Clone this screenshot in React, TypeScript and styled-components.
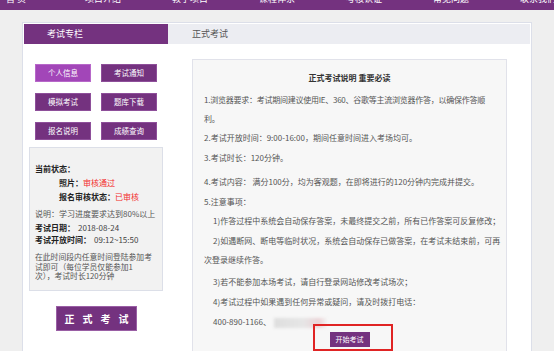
import styled, { createGlobalStyle } from "styled-components";

const GlobalStyle = createGlobalStyle`
  html, body {
    margin: 0;
    padding: 0;
    background: #efefef;
    font-family: "Noto Sans CJK SC", "Noto Sans", sans-serif;
  }
  * {
    box-sizing: border-box;
  }
`;

const PURPLE = "#74327f";

const TopNav = styled.div`
  height: 10px;
  background: ${PURPLE};
  display: flex;
  justify-content: center;
  align-items: flex-end;
  overflow: hidden;
`;

const NavItem = styled.div`
  flex: 0 0 87px;
  text-align: center;
  color: #ffffff;
  font-size: 9px;
  line-height: 12px;
  padding-bottom: 5px;
`;

const Panel = styled.div`
  width: 510px;
  margin: 12px 0 0 22px;
  background: #ffffff;
  border: 1px solid #dcdfe9;
  padding: 1px;
  height: 340px;
`;

const TabBar = styled.div`
  display: flex;
  height: 20px;
`;

const Tab = styled.div<{ $active?: boolean }>`
  flex: ${(p) => (p.$active ? "0 0 144px" : "1")};
  background: ${(p) => (p.$active ? PURPLE : "#ecedf2")};
  color: ${(p) => (p.$active ? "#ffffff" : "#555555")};
  font-size: 9px;
  line-height: 20px;
  padding-left: ${(p) => (p.$active ? "23px" : "24px")};
`;

const Body = styled.div`
  display: flex;
  align-items: flex-start;
`;

const Sidebar = styled.div`
  flex: 0 0 144px;
  display: flex;
  flex-direction: column;
  align-items: center;
`;

const MenuGrid = styled.div`
  margin-top: 20px;
  display: grid;
  grid-template-columns: 56px 56px;
  column-gap: 10px;
  row-gap: 11px;
`;

const MenuButton = styled.div<{ $active?: boolean }>`
  height: 18px;
  background: ${(p) => (p.$active ? "#a246b8" : PURPLE)};
  border: 1px solid ${(p) => (p.$active ? "#b768c9" : "#8e4f9a")};
  color: #ffffff;
  font-size: 7.5px;
  line-height: 16px;
  text-align: center;
`;

const StatusBox = styled.div`
  margin-top: 7px;
  width: 134px;
  background: #f2f2f2;
  border: 1px solid #dcdfe8;
  padding: 14px 4px 9px 5px;
  font-size: 8px;
  color: #333333;
`;

const StatusLine = styled.div<{ $indent?: number; $mt?: number; $lh?: number }>`
  line-height: ${(p) => p.$lh ?? 14}px;
  padding-left: ${(p) => p.$indent ?? 0}px;
  margin-top: ${(p) => p.$mt ?? 0}px;
  white-space: nowrap;
`;

const Label = styled.b`
  color: #222222;
  font-weight: 700;
`;

const Red = styled.span`
  color: #f22b2b;
`;

const Grey = styled.span`
  color: #555555;
`;

const Value = styled.span`
  color: #444444;
  margin-left: 3px;
`;

const StatusNote = styled.div`
  margin-top: 6px;
  font-size: 7.8px;
  line-height: 9.5px;
  color: #555555;
  white-space: nowrap;
`;

const BigButton = styled.div`
  margin-top: 15px;
  width: 81px;
  height: 25px;
  background: ${PURPLE};
  border: 1px solid #9a5fa5;
  color: #ffffff;
  font-size: 10px;
  font-weight: 700;
  line-height: 23px;
  letter-spacing: 8px;
  text-align: center;
  white-space: nowrap;
  padding-left: 8px;
`;

const Notice = styled.div`
  position: relative;
  margin: 15px 0 0 24px;
  width: 315px;
  height: 300px;
  background: #f7f7f7;
  border: 1px solid #e1e2ea;
  padding: 8px 11px 0 11px;
  font-size: 8px;
  color: #555555;
`;

const NoticeTitle = styled.div`
  line-height: 20px;
  text-align: center;
  font-weight: 700;
  color: #333333;
`;

const Para = styled.div<{ $mt?: number; $indent?: boolean; $tight?: boolean }>`
  line-height: 19px;
  margin-top: ${(p) => p.$mt ?? 0}px;
  text-indent: ${(p) => (p.$indent ? "9px" : "0")};
  letter-spacing: ${(p) => (p.$tight ? "-0.25px" : "0")};
  white-space: nowrap;
`;

const Blurred = styled.span`
  display: inline-block;
  width: 53px;
  height: 10px;
  vertical-align: middle;
  margin-left: 3px;
  background: linear-gradient(90deg, #dedede 0%, #e6e6e6 55%, #ebd3d6 85%, #f3f3f3 100%);
  filter: blur(1.5px);
`;

const StartButton = styled.div`
  margin: 1px auto 0;
  width: 40px;
  height: 15px;
  background: ${PURPLE};
  color: #ffffff;
  font-size: 7px;
  line-height: 15px;
  text-align: center;
  text-indent: 0;
`;

const Highlight = styled.div`
  position: absolute;
  left: 120px;
  top: 264px;
  width: 80px;
  height: 27px;
  border: 2px solid #e02424;
`;

const navItems = ["首 页", "项目介绍", "教学项目", "课程体系", "考核认证", "常见问题", "联系我们"];
const menu = ["个人信息", "考试通知", "模拟考试", "题库下载", "报名说明", "成绩查询"];

export default function App() {
  return (
    <>
      <GlobalStyle />
      <TopNav>
        {navItems.map((n) => (
          <NavItem key={n}>{n}</NavItem>
        ))}
      </TopNav>
      <Panel>
        <TabBar>
          <Tab $active>考试专栏</Tab>
          <Tab>正式考试</Tab>
        </TabBar>
        <Body>
          <Sidebar>
            <MenuGrid>
              {menu.map((m, i) => (
                <MenuButton key={m} $active={i === 0}>
                  {m}
                </MenuButton>
              ))}
            </MenuGrid>
            <StatusBox>
              <StatusLine>
                <Label>当前状态：</Label>
              </StatusLine>
              <StatusLine $indent={24}>
                <Label>照片：</Label>
                <Red>审核通过</Red>
              </StatusLine>
              <StatusLine $indent={24}>
                <Label>报名审核状态：</Label>
                <Red>已审核</Red>
              </StatusLine>
              <StatusLine $mt={3}>
                <Grey>说明：学习进度要求达到80%以上</Grey>
              </StatusLine>
              <StatusLine $mt={1} $lh={12}>
                <Label>考试日期：</Label>
                <Value>2018-08-24</Value>
              </StatusLine>
              <StatusLine $lh={12}>
                <Label>考试开放时间：</Label>
                <Value>09:12~15:50</Value>
              </StatusLine>
              <StatusNote>
                在此时间段内任意时间登陆参加考
                <br />
                试即可（每位学员仅能参加1
                <br />
                次），考试时长120分钟
              </StatusNote>
            </StatusBox>
            <BigButton>正式考试</BigButton>
          </Sidebar>
          <Notice>
            <NoticeTitle>正式考试说明 重要必读</NoticeTitle>
            <Para $mt={2} $tight>
              1.浏览器要求：考试期间建议使用IE、360、谷歌等主流浏览器作答，以确保作答顺
              <br />
              利。
            </Para>
            <Para>2.考试开放时间：9:00-16:00，期间任意时间进入考场均可。</Para>
            <Para $mt={1}>3.考试时长：120分钟。</Para>
            <Para $mt={5}>4.考试内容： 满分100分，均为客观题，在即将进行的120分钟内完成并提交。</Para>
            <Para $mt={1}>5.注意事项：</Para>
            <Para $indent>1)作答过程中系统会自动保存答案，未最终提交之前，所有已作答案可反复修改；</Para>
            <Para $mt={1} $indent>
              2)如遇断网、断电等临时状况，系统会自动保存已做答案，在考试未结束前，可再
              <br />
              次登录继续作答。
            </Para>
            <Para $mt={3} $indent>3)若不能参加本场考试，请自行登录网站修改考试场次；</Para>
            <Para $mt={1} $indent>4)考试过程中如果遇到任何异常或疑问，请及时拨打电话：</Para>
            <Para $mt={1} $indent>
              400-890-1166、
              <Blurred />
            </Para>
            <StartButton>开始考试</StartButton>
            <Highlight />
          </Notice>
        </Body>
      </Panel>
    </>
  );
}
